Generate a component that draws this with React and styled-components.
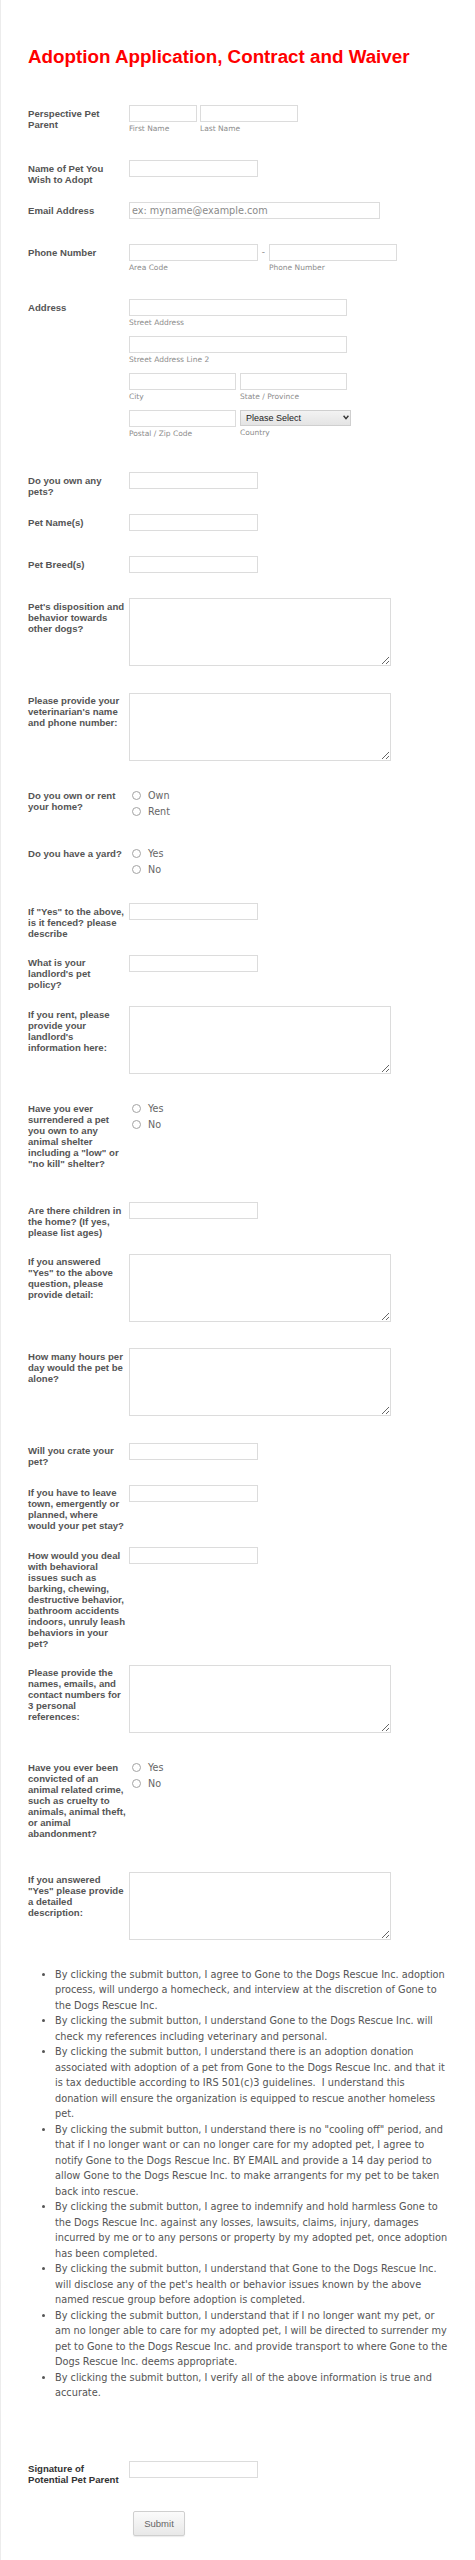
import styled, { createGlobalStyle } from 'styled-components'

const GlobalStyle = createGlobalStyle`
  html, body {
    margin: 0;
    padding: 0;
    background: #fff;
  }
  body {
    font-family: 'Liberation Sans', Arial, sans-serif;
  }
`

const Page = styled.div`
  min-height: 2560px;
  box-sizing: border-box;
  border-left: 1px solid #ececec;
  padding-top: 45px;
`

const Title = styled.h1`
  margin: 0 0 29px 27px;
  font: bold 18.8px/23px 'Liberation Sans', Arial, sans-serif;
  color: #ff0000;
`

const Row = styled.div`
  display: flex;
  align-items: flex-start;
  padding: 8px 0 8px 27px;
`

const Label = styled.label`
  flex: 0 0 98.3px;
  margin-right: 2.7px;
  padding-top: 2.5px;
  padding-bottom: ${p => (p.$radio ? '17px' : '0')};
  font: bold 9.6px/11px 'Liberation Sans', Arial, sans-serif;
  color: ${p => (p.$dark ? '#333' : '#555')};
`

const Field = styled.div`
  padding-bottom: ${p => p.$pb ?? 9}px;
`

const Inline = styled.div`
  display: flex;
  align-items: flex-start;
  gap: ${p => p.$gap ?? 0}px;
  margin-bottom: ${p => p.$mb ?? 0}px;
`

const Sub = styled.div`
  display: flex;
  flex-direction: column;
`

const Input = styled.input`
  display: block;
  box-sizing: border-box;
  width: ${p => p.$w ?? 129}px;
  height: 17px;
  margin: 0;
  padding: 0 2px;
  border: 1px solid #dcdcdc;
  border-radius: 0;
  background: #fff;
  font: 9.7px 'DejaVu Sans', Verdana, sans-serif;
  color: #555;
  outline: none;

  &::placeholder {
    color: #8a8a8a;
  }
`

const SubLabel = styled.span`
  display: block;
  height: 13px;
  font: 7.5px/13px 'DejaVu Sans', Verdana, sans-serif;
  color: #8c8c8c;
  white-space: nowrap;
`

const Dash = styled.span`
  width: 11px;
  height: 17px;
  line-height: 17px;
  text-align: center;
  font: 9px/17px 'DejaVu Sans', Verdana, sans-serif;
  color: #888;
`

const TextArea = styled.textarea`
  display: block;
  box-sizing: border-box;
  width: 262px;
  height: 68px;
  margin: 0;
  padding: 2px;
  border: 1px solid #dcdcdc;
  border-radius: 0;
  font: 9.7px 'DejaVu Sans', Verdana, sans-serif;
  color: #555;
  outline: none;
`

const SelectWrap = styled.div`
  position: relative;
  width: 111px;
  height: 16px;
`

const Select = styled.select`
  appearance: none;
  display: block;
  box-sizing: border-box;
  width: 100%;
  height: 100%;
  margin: 0;
  padding: 0 0 0 5px;
  border: 1px solid #cfcfcf;
  border-radius: 0;
  background: linear-gradient(#f3f3f3, #e4e4e4);
  font: 9px 'Liberation Sans', Arial, sans-serif;
  color: #222;
  outline: none;
`

const Chevron = styled.svg`
  position: absolute;
  right: 2px;
  top: 5px;
  pointer-events: none;
`

const RadioItem = styled.label`
  display: flex;
  align-items: center;
  height: 16px;
  padding-left: 3px;
  font: 9.6px 'DejaVu Sans', Verdana, sans-serif;
  color: #666;
`

const Radio = styled.input.attrs({ type: 'radio' })`
  appearance: none;
  box-sizing: border-box;
  width: 9px;
  height: 9px;
  margin: 0 7px 0 0;
  border: 1px solid #a3a3a3;
  border-radius: 50%;
  background: #fff;
`

const Terms = styled.ul`
  margin: 8.75px 0 51.75px 0;
  padding: 0 0 0 54px;
  width: 395px;
  font: 9.75px/15.5px 'DejaVu Sans', Verdana, sans-serif;
  color: #555;
  list-style: disc;
`

const ButtonRow = styled.div`
  padding: 16px 0 0 132px;
`

const SubmitButton = styled.button`
  width: 52px;
  height: 25px;
  box-sizing: border-box;
  border: 1px solid #cfcfcf;
  border-radius: 2px;
  background: linear-gradient(#fbfbfb, #e8e8e8);
  box-shadow: 0 1px 1px rgba(0, 0, 0, 0.08);
  font: 9.5px 'Liberation Sans', Arial, sans-serif;
  color: #666;
  cursor: pointer;
`

const questions = [
  { label: 'Do you own any pets?', type: 'text' },
  { label: 'Pet Name(s)', type: 'text' },
  { label: 'Pet Breed(s)', type: 'text' },
  { label: "Pet's disposition and behavior towards other dogs?", type: 'area' },
  { label: "Please provide your veterinarian's name and phone number:", type: 'area' },
  { label: 'Do you own or rent your home?', type: 'radio', options: ['Own', 'Rent'] },
  { label: 'Do you have a yard?', type: 'radio', options: ['Yes', 'No'] },
  { label: 'If "Yes" to the above, is it fenced? please describe', type: 'text' },
  { label: "What is your landlord's pet policy?", type: 'text' },
  { label: "If you rent, please provide your landlord's information here:", type: 'area' },
  {
    label: 'Have you ever surrendered a pet you own to any animal shelter including a "low" or "no kill" shelter?',
    type: 'radio',
    options: ['Yes', 'No'],
  },
  { label: 'Are there children in the home? (If yes, please list ages)', type: 'text' },
  { label: 'If you answered "Yes" to the above question, please provide detail:', type: 'area' },
  { label: 'How many hours per day would the pet be alone?', type: 'area' },
  { label: 'Will you crate your pet?', type: 'text' },
  { label: 'If you have to leave town, emergently or planned, where would your pet stay?', type: 'text' },
  {
    label:
      'How would you deal with behavioral issues such as barking, chewing, destructive behavior, bathroom accidents indoors, unruly leash behaviors in your pet?',
    type: 'text',
  },
  { label: 'Please provide the names, emails, and contact numbers for 3 personal references:', type: 'area' },
  {
    label:
      'Have you ever been convicted of an animal related crime, such as cruelty to animals, animal theft, or animal abandonment?',
    type: 'radio',
    options: ['Yes', 'No'],
  },
  { label: 'If you answered "Yes" please provide a detailed description:', type: 'area' },
]

const terms = [
  'By clicking the submit button, I agree to Gone to the Dogs Rescue Inc. adoption process, will undergo a homecheck, and interview at the discretion of Gone to the Dogs Rescue Inc.',
  'By clicking the submit button, I understand Gone to the Dogs Rescue Inc. will check my references including veterinary and personal.',
  'By clicking the submit button, I understand there is an adoption donation associated with adoption of a pet from Gone to the Dogs Rescue Inc. and that it is tax deductible according to IRS 501(c)3 guidelines.\u00a0 I understand this donation will ensure the organization is equipped to rescue another homeless pet.',
  'By clicking the submit button, I understand there is no "cooling off" period, and that if I no longer want or can no longer care for my adopted pet, I agree to notify Gone to the Dogs Rescue Inc. BY EMAIL and provide a 14 day period to allow Gone to the Dogs Rescue Inc. to make arrangents for my pet to be taken back into rescue.',
  'By clicking the submit button, I agree to indemnify and hold harmless Gone to the Dogs Rescue Inc. against any losses, lawsuits, claims, injury, damages incurred by me or to any persons or property by my adopted pet, once adoption has been completed.',
  "By clicking the submit button, I understand that Gone to the Dogs Rescue Inc. will disclose any of the pet's health or behavior issues known by the above named rescue group before adoption is completed.",
  'By clicking the submit button, I understand that if I no longer want my pet, or am no longer able to care for my adopted pet, I will be directed to surrender my pet to Gone to the Dogs Rescue Inc. and provide transport to where Gone to the Dogs Rescue Inc. deems appropriate.',
  'By clicking the submit button, I verify all of the above information is true and accurate.',
]

function Question({ q, index }) {
  const name = 'q' + index
  if (q.type === 'radio') {
    return (
      <Row>
        <Label $radio>{q.label}</Label>
        <Field $pb={10}>
          {q.options.map(opt => (
            <RadioItem key={opt}>
              <Radio name={name} value={opt} />
              {opt}
            </RadioItem>
          ))}
        </Field>
      </Row>
    )
  }
  if (q.type === 'area') {
    return (
      <Row>
        <Label htmlFor={name}>{q.label}</Label>
        <Field $pb={10.5}>
          <TextArea id={name} />
        </Field>
      </Row>
    )
  }
  return (
    <Row>
      <Label htmlFor={name}>{q.label}</Label>
      <Field>
        <Input id={name} />
      </Field>
    </Row>
  )
}

export default function App() {
  return (
    <>
      <GlobalStyle />
      <Page>
        <Title>Adoption Application, Contract and Waiver</Title>

        <Row>
          <Label>Perspective Pet Parent</Label>
          <Field>
            <Inline $gap={3}>
              <Sub>
                <Input $w={68} />
                <SubLabel>First Name</SubLabel>
              </Sub>
              <Sub>
                <Input $w={98} />
                <SubLabel>Last Name</SubLabel>
              </Sub>
            </Inline>
          </Field>
        </Row>

        <Row>
          <Label htmlFor="petname">Name of Pet You Wish to Adopt</Label>
          <Field>
            <Input id="petname" />
          </Field>
        </Row>

        <Row>
          <Label htmlFor="email">Email Address</Label>
          <Field>
            <Input id="email" $w={251} placeholder="ex: myname@example.com" />
          </Field>
        </Row>

        <Row>
          <Label>Phone Number</Label>
          <Field>
            <Inline>
              <Sub>
                <Input $w={129} />
                <SubLabel>Area Code</SubLabel>
              </Sub>
              <Dash>-</Dash>
              <Sub>
                <Input $w={128} />
                <SubLabel>Phone Number</SubLabel>
              </Sub>
            </Inline>
          </Field>
        </Row>

        <Row>
          <Label>Address</Label>
          <Field>
            <Inline $mb={7}>
              <Sub>
                <Input $w={218} />
                <SubLabel>Street Address</SubLabel>
              </Sub>
            </Inline>
            <Inline $mb={7}>
              <Sub>
                <Input $w={218} />
                <SubLabel>Street Address Line 2</SubLabel>
              </Sub>
            </Inline>
            <Inline $gap={4} $mb={7}>
              <Sub>
                <Input $w={107} />
                <SubLabel>City</SubLabel>
              </Sub>
              <Sub>
                <Input $w={107} />
                <SubLabel>State / Province</SubLabel>
              </Sub>
            </Inline>
            <Inline $gap={4} $mb={7}>
              <Sub>
                <Input $w={107} />
                <SubLabel>Postal / Zip Code</SubLabel>
              </Sub>
              <Sub>
                <SelectWrap>
                  <Select defaultValue="">
                    <option value="">Please Select</option>
                    <option>United States</option>
                    <option>Canada</option>
                  </Select>
                  <Chevron width="6" height="5" viewBox="0 0 6 5">
                    <path d="M0.6 0.8 L3 3.6 L5.4 0.8" fill="none" stroke="#333" strokeWidth="1.4" />
                  </Chevron>
                </SelectWrap>
                <SubLabel>Country</SubLabel>
              </Sub>
            </Inline>
          </Field>
        </Row>

        {questions.map((q, i) => (
          <Question key={i} q={q} index={i} />
        ))}

        <Terms>
          {terms.map((t, i) => (
            <li key={i}>{t}</li>
          ))}
        </Terms>

        <Row>
          <Label $dark htmlFor="signature">Signature of Potential Pet Parent</Label>
          <Field>
            <Input id="signature" />
          </Field>
        </Row>

        <ButtonRow>
          <SubmitButton type="submit">Submit</SubmitButton>
        </ButtonRow>
      </Page>
    </>
  )
}
